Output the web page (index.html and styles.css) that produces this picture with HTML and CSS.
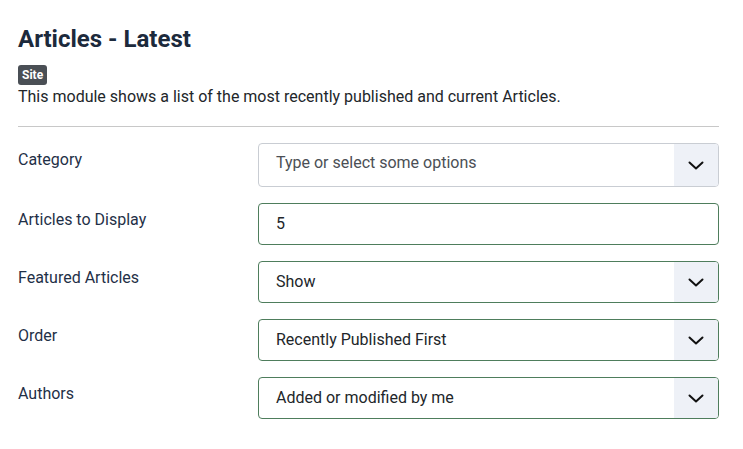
FILE: index.html
```html
<!DOCTYPE html>
<html lang="en">
<head>
<meta charset="utf-8">
<title>Articles - Latest</title>
<link rel="stylesheet" href="styles.css">
</head>
<body>
<div class="page">
  <h1 class="title">Articles - Latest</h1>
  <span class="badge">Site</span>
  <p class="desc">This module shows a list of the most recently published and current Articles.</p>
  <hr class="sep">
  <div class="form">
    <div class="row">
      <label class="label">Category</label>
      <div class="field field-choices">
        <span class="value placeholder">Type or select some options</span>
        <span class="caret"><svg width="16" height="9" viewBox="0 0 16 9"><path d="M1.5 1.5 L8 7.5 L14.5 1.5" fill="none" stroke="#111" stroke-width="2" stroke-linecap="round" stroke-linejoin="round"/></svg></span>
      </div>
    </div>
    <div class="row">
      <label class="label">Articles to Display</label>
      <div class="field">
        <span class="value">5</span>
      </div>
    </div>
    <div class="row">
      <label class="label">Featured Articles</label>
      <div class="field">
        <span class="value">Show</span>
        <span class="caret"><svg width="16" height="9" viewBox="0 0 16 9"><path d="M1.5 1.5 L8 7.5 L14.5 1.5" fill="none" stroke="#111" stroke-width="2" stroke-linecap="round" stroke-linejoin="round"/></svg></span>
      </div>
    </div>
    <div class="row">
      <label class="label">Order</label>
      <div class="field">
        <span class="value">Recently Published First</span>
        <span class="caret"><svg width="16" height="9" viewBox="0 0 16 9"><path d="M1.5 1.5 L8 7.5 L14.5 1.5" fill="none" stroke="#111" stroke-width="2" stroke-linecap="round" stroke-linejoin="round"/></svg></span>
      </div>
    </div>
    <div class="row">
      <label class="label">Authors</label>
      <div class="field">
        <span class="value">Added or modified by me</span>
        <span class="caret"><svg width="16" height="9" viewBox="0 0 16 9"><path d="M1.5 1.5 L8 7.5 L14.5 1.5" fill="none" stroke="#111" stroke-width="2" stroke-linecap="round" stroke-linejoin="round"/></svg></span>
      </div>
    </div>
  </div>
</div>
</body>
</html>
```
FILE: styles.css
```css
html, body {
  margin: 0;
  padding: 0;
  background: #fff;
}
body {
  font-family: Roboto, "Liberation Sans", sans-serif;
  color: #22262a;
}
.page {
  width: 701px;
  padding: 24px 0 0 18px;
}
.title {
  margin: 0;
  font-size: 24px;
  font-weight: 700;
  line-height: 30px;
  color: #1c2a3c;
}
.badge {
  display: inline-block;
  margin-top: 11px;
  padding: 0 4px;
  height: 20px;
  line-height: 20px;
  font-size: 12px;
  font-weight: 700;
  color: #fff;
  background: #4a4f55;
  border-radius: 3px;
}
.desc {
  margin: 0;
  font-size: 16px;
  line-height: 24px;
  color: #22262a;
}
.sep {
  margin: 17px 0 16px;
  border: 0;
  border-top: 1px solid #c8c8c8;
}
.form {
  display: flex;
  flex-direction: column;
  gap: 16px;
}
.row {
  display: flex;
}
.label {
  width: 240px;
  flex: none;
  font-size: 16px;
  line-height: 24px;
  padding-top: 5px;
  color: #1f3047;
}
.field {
  flex: 1;
  height: 40px;
  display: flex;
  align-items: center;
  border: 1px solid #4e7d5c;
  border-radius: 4px;
  background: #fff;
  overflow: hidden;
}
.field-choices {
  height: 42px;
  border-color: #c9cdd3;
  align-items: flex-start;
}
.value {
  flex: 1;
  padding-left: 17px;
  font-size: 16px;
  line-height: 24px;
}
.field-choices .value {
  padding-top: 7px;
}
.placeholder {
  color: #4b4f55;
}
.caret {
  flex: none;
  width: 44px;
  align-self: stretch;
  background: #eef1f7;
  display: flex;
  align-items: center;
  justify-content: center;
}
.caret svg {
  display: block;
}
```
